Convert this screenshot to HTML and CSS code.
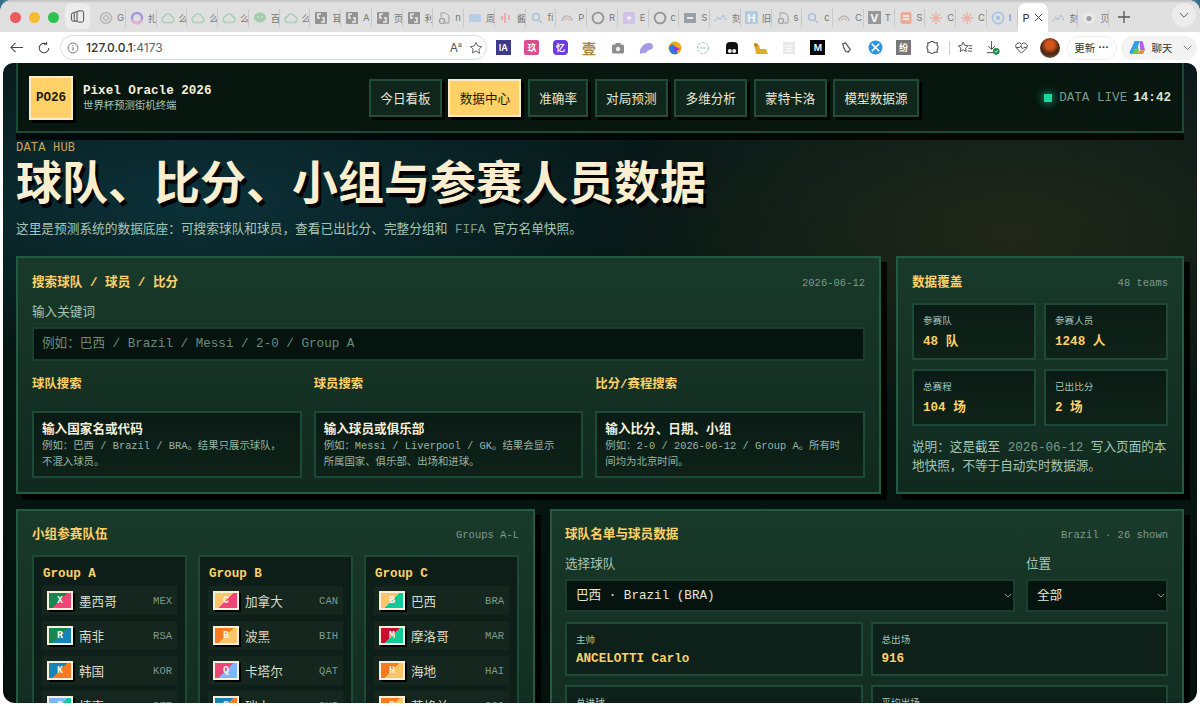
FILE: index.html
```html
<!DOCTYPE html>
<html lang="zh-CN">
<head>
<meta charset="utf-8">
<title>Pixel Oracle 2026</title>
<link rel="stylesheet" href="styles.css">
</head>
<body>
<svg class="defs" width="0" height="0" aria-hidden="true">
  <symbol id="i-ring" viewBox="0 0 14 14"><circle cx="7" cy="7" r="5.5" fill="#ddd" stroke="#aaa" stroke-width="1.5"/><circle cx="7" cy="7" r="2.4" fill="none" stroke="#999"/></symbol>
  <symbol id="i-purple" viewBox="0 0 14 14"><circle cx="7" cy="7" r="5" fill="none" stroke="#8f7be0" stroke-width="2.4"/><path d="M2 9a5.5 5.5 0 0 0 10 0" fill="none" stroke="#ef9ac6" stroke-width="2.4"/></symbol>
  <symbol id="i-cloud" viewBox="0 0 14 14"><path d="M4 11.5a3 3 0 0 1-.6-5.9 3.8 3.8 0 0 1 7.2 0 3 3 0 0 1-.6 5.9z" fill="none" stroke="#9ccdb0" stroke-width="1.6"/></symbol>
  <symbol id="i-wechat" viewBox="0 0 14 14"><ellipse cx="7" cy="6.5" rx="6" ry="5" fill="#8cc79a"/><circle cx="5" cy="6" r=".8" fill="#e5e5e5"/><circle cx="9" cy="6" r=".8" fill="#e5e5e5"/></symbol>
  <symbol id="i-square" viewBox="0 0 14 14"><rect x="1" y="1" width="12" height="12" rx="1" fill="#777"/><path d="M7 3H4v4h2M7 11h3V7H8" fill="none" stroke="#eee" stroke-width="1.6"/></symbol>
  <symbol id="i-doc" viewBox="0 0 14 14"><path d="M4 6V2h5l3 3v7H8" fill="none" stroke="#888"/><circle cx="5" cy="10" r="2.6" fill="none" stroke="#888" stroke-width="1.3"/></symbol>
  <symbol id="i-mail" viewBox="0 0 14 14"><rect x="1" y="3" width="12" height="8" rx="1.5" fill="#a6c9e8"/></symbol>
  <symbol id="i-red" viewBox="0 0 14 14"><path d="M6 2v10M3 5v4M10 4v5" stroke="#ef9aa0" stroke-width="2" fill="none"/></symbol>
  <symbol id="i-search" viewBox="0 0 14 14"><circle cx="6" cy="6" r="3.4" fill="none" stroke="#8fb3dd" stroke-width="1.4"/><path d="M9 9l3 3" stroke="#8fb3dd" stroke-width="1.4"/></symbol>
  <symbol id="i-arc" viewBox="0 0 14 14"><path d="M2 10a5 5 0 0 1 10 0" fill="none" stroke="#aaa" stroke-width="1.3"/><path d="M4.5 10a2.5 2.5 0 0 1 5 0" fill="none" stroke="#e8b0a8" stroke-width="1.3"/></symbol>
  <symbol id="i-plus" viewBox="0 0 14 14"><rect x="1" y="1" width="12" height="12" rx="2.5" fill="#c9b6ee"/><path d="M7 4.5v5M4.5 7h5" stroke="#fff" stroke-width="1.4"/></symbol>
  <symbol id="i-git" viewBox="0 0 14 14"><circle cx="7" cy="7" r="5.4" fill="none" stroke="#777" stroke-width="1.8"/></symbol>
  <symbol id="i-bar" viewBox="0 0 14 14"><rect x="1" y="2" width="12" height="10" rx="1" fill="#7b8794"/><rect x="4" y="6" width="6" height="2" fill="#eee"/></symbol>
  <symbol id="i-dots" viewBox="0 0 14 14"><path d="M1 10l3-4 2 3 3-5 3 5" fill="none" stroke="#9bb8d8" stroke-width="1.4" stroke-dasharray="2 1"/></symbol>
  <symbol id="i-book" viewBox="0 0 14 14"><rect x="1.5" y="1" width="11" height="12" rx="2" fill="#ef9a80"/><path d="M4 5h6M4 8h6" stroke="#fff" stroke-width="1.4"/></symbol>
  <symbol id="i-star" viewBox="0 0 14 14"><path d="M7 1v12M1 7h12M3 3l8 8M11 3l-8 8" stroke="#eda38f" stroke-width="1.4"/></symbol>
  <symbol id="i-target" viewBox="0 0 14 14"><circle cx="7" cy="7" r="5.6" fill="none" stroke="#8fb8e8" stroke-width="1.6"/><circle cx="7" cy="7" r="2.2" fill="#8fb8e8"/></symbol>
  <symbol id="i-apple" viewBox="0 0 14 14"><circle cx="7" cy="7" r="6" fill="#eee"/><circle cx="7" cy="7.5" r="2.6" fill="#888"/></symbol>
</svg>

<div class="window">
  <div class="tabstrip">
    <div class="lights"><i class="light red"></i><i class="light amber"></i><i class="light green"></i></div>
    <div class="tabgroup"><svg viewBox="0 0 16 16" width="15" height="15"><rect x="1.5" y="4" width="6" height="9" rx="2" fill="none" stroke="#444"/><rect x="4.500" y="3" width="6" height="10" rx="2" fill="#ececec" stroke="#444"/><rect x="7.500" y="2" width="7" height="12" rx="2" fill="#ececec" stroke="#444"/></svg></div>
    <div class="tabs">
      <div class="tab"><svg class="fav"><use href="#i-ring"/></svg><b>G</b></div>
      <div class="tab"><svg class="fav"><use href="#i-purple"/></svg><b>扎</b></div>
      <div class="tab"><svg class="fav"><use href="#i-cloud"/></svg><b>么</b></div>
      <div class="tab"><svg class="fav"><use href="#i-cloud"/></svg><b>么</b></div>
      <div class="tab"><svg class="fav"><use href="#i-cloud"/></svg><b>么</b></div>
      <div class="tab"><svg class="fav"><use href="#i-wechat"/></svg><b>百</b></div>
      <div class="tab"><svg class="fav"><use href="#i-cloud"/></svg><b>么</b></div>
      <div class="tab"><svg class="fav"><use href="#i-square"/></svg><b>耳</b></div>
      <div class="tab"><svg class="fav"><use href="#i-square"/></svg><b>A</b></div>
      <div class="tab"><svg class="fav"><use href="#i-square"/></svg><b>页</b></div>
      <div class="tab"><svg class="fav"><use href="#i-square"/></svg><b>利</b></div>
      <div class="tab"><svg class="fav"><use href="#i-doc"/></svg><b>n</b></div>
      <div class="tab"><svg class="fav"><use href="#i-mail"/></svg><b>周</b></div>
      <div class="tab"><svg class="fav"><use href="#i-red"/></svg><b>酱</b></div>
      <div class="tab"><svg class="fav"><use href="#i-search"/></svg><b>fi</b></div>
      <div class="tab"><svg class="fav"><use href="#i-arc"/></svg><b>P</b></div>
      <div class="tab"><svg class="fav"><use href="#i-git"/></svg><b>R</b></div>
      <div class="tab"><svg class="fav"><use href="#i-plus"/></svg><b>E</b></div>
      <div class="tab"><svg class="fav"><use href="#i-git"/></svg><b>c</b></div>
      <div class="tab"><svg class="fav"><use href="#i-bar"/></svg><b>S</b></div>
      <div class="tab"><svg class="fav"><use href="#i-dots"/></svg><b>刻</b></div>
      <div class="tab"><span class="fav-box hblue">H</span><b>旧</b></div>
      <div class="tab"><svg class="fav"><use href="#i-doc"/></svg><b>s</b></div>
      <div class="tab"><svg class="fav"><use href="#i-search"/></svg><b>c</b></div>
      <div class="tab"><svg class="fav"><use href="#i-arc"/></svg><b>C</b></div>
      <div class="tab"><span class="fav-box vgray">V</span><b>T</b></div>
      <div class="tab"><svg class="fav"><use href="#i-book"/></svg><b>S</b></div>
      <div class="tab"><svg class="fav"><use href="#i-star"/></svg><b>C</b></div>
      <div class="tab"><svg class="fav"><use href="#i-star"/></svg><b>C</b></div>
      <div class="tab"><svg class="fav"><use href="#i-target"/></svg><b>I</b></div>
      <div class="tab-active"><span>P</span><svg viewBox="0 0 10 10" width="9" height="9"><path d="M1 1l8 8M9 1l-8 8" stroke="#444" stroke-width="1.1"/></svg></div>
      <div class="tab"><svg class="fav"><use href="#i-dots"/></svg><b>刻</b></div>
      <div class="tab"><svg class="fav"><use href="#i-apple"/></svg><b>贝</b></div>
    </div>
    <svg class="newtab" viewBox="0 0 14 14" width="14" height="14"><path d="M7 1v12M1 7h12" stroke="#555" stroke-width="1.3"/></svg>
    <div class="tabmenu"><svg viewBox="0 0 12 8" width="10" height="7"><path d="M1 1l5 5 5-5" fill="none" stroke="#555" stroke-width="1.1"/></svg></div>
  </div>

  <div class="toolbar">
    <svg class="tool-back" viewBox="0 0 16 16" width="15" height="15"><path d="M15 8H2M7 3 2 8l5 5" fill="none" stroke="#444" stroke-width="1.1"/></svg>
    <svg class="tool-reload" viewBox="0 0 16 16" width="14" height="14"><path d="M13.5 8A5.5 5.5 0 1 1 11 3.4M11 .8v3h-3" fill="none" stroke="#444" stroke-width="1.2"/></svg>
    <div class="urlbar">
      <svg viewBox="0 0 14 14" width="12" height="12"><circle cx="7" cy="7" r="5.8" fill="none" stroke="#666"/><path d="M7 6v4M7 3.8v1.2" stroke="#666" stroke-width="1.2"/></svg>
      <span class="url"><strong>127.0.0.1</strong>:4173</span>
      <span class="url-aa">A<sup>a</sup></span>
      <svg viewBox="0 0 16 16" width="14" height="14"><path d="M8 1.6l2 4.2 4.6.6-3.3 3.2.8 4.6L8 11.4l-4.1 2.2.8-4.6L1.400 6.400 6 5.800z" fill="none" stroke="#555"/></svg>
    </div>
    <div class="exts">
      <span class="ext"><span class="ext-box ia">IA</span></span>
      <span class="ext"><span class="ext-box pink">玖</span></span>
      <span class="ext"><span class="ext-box violet">忆</span></span>
      <span class="ext"><span class="ext-tan">壹</span></span>
      <span class="ext"><svg viewBox="0 0 14 14" width="14" height="14"><rect x="1" y="3.500" width="12" height="9" rx="1.500" fill="#8d8d8d"/><rect x="4.500" y="2" width="5" height="3" fill="#8d8d8d"/><circle cx="7" cy="8" r="2.200" fill="#eee"/></svg></span>
      <span class="ext"><svg viewBox="0 0 16 14" width="16" height="14"><path d="M2 13c-1-5 3-11 9-11 3 0 4 2 4 4s-3 3-4 3-3 4-5 3-2 1-4 1z" fill="#a79be8"/></svg></span>
      <span class="ext"><svg viewBox="0 0 14 14" width="14" height="14"><circle cx="7" cy="7" r="6.500" fill="#f3a51c"/><path d="M1 7a6 6 0 0 0 8 6V7L4 3a6 6 0 0 0-3 4z" fill="#2a7fd8"/><path d="M6 5l6 3-6 3z" fill="#8a3be0"/></svg></span>
      <span class="ext"><svg viewBox="0 0 14 14" width="14" height="14"><circle cx="7" cy="7" r="5.500" fill="none" stroke="#9cc9aa" stroke-dasharray="3 1"/><path d="M4 7h6" stroke="#9cc9aa"/></svg></span>
      <span class="ext"><svg viewBox="0 0 14 14" width="14" height="14"><path d="M1 5a4 4 0 0 1 4-4h4a4 4 0 0 1 4 4v8H1z" fill="#111"/><circle cx="4.800" cy="10" r="2" fill="#eee"/><circle cx="9.200" cy="10" r="2" fill="#eee"/></svg></span>
      <span class="ext"><svg viewBox="0 0 16 14" width="16" height="14"><path d="M1 2l3 2h2l1 4h6l2 5H3z" fill="#e0ad24"/><circle cx="3" cy="4" r="2" fill="#c28f1c"/></svg></span>
      <span class="ext"><svg viewBox="0 0 14 14" width="14" height="14"><rect x="1" y="1" width="12" height="12" fill="#e8e8e8"/><path d="M4 5h6M4 7.500h6M4 10h6" stroke="#fff"/></svg></span>
      <span class="ext"><span class="ext-box black">M</span></span>
      <span class="ext"><svg viewBox="0 0 14 14" width="13" height="13"><path d="M3 3l3-1 2 3 3 4-2 3-3-1-2-4z" fill="none" stroke="#666" stroke-width="1.500"/></svg></span>
      <span class="ext"><svg viewBox="0 0 14 14" width="15" height="15"><circle cx="7" cy="7" r="6.500" fill="#2f93e0"/><path d="M3.500 3.500l7 7M10.500 3.500l-7 7" stroke="#fff" stroke-width="1.600"/></svg></span>
      <span class="ext"><span class="ext-box gray">纷</span></span>
      <span class="ext"><svg viewBox="0 0 16 16" width="15" height="15"><path d="M5 3a3 3 0 0 1 5 0h3v3a2.500 2.500 0 0 1 0 4v3h-3a3 3 0 0 1-5 0H3v-3a2.500 2.500 0 0 1 0-4V3z" fill="none" stroke="#444" stroke-width="1.100"/></svg></span>
    </div>
    <i class="tool-sep"></i>
    <svg class="tool-fav" viewBox="0 0 18 16" width="16" height="15"><path d="M7 2l1.700 3.600 3.800.5-2.800 2.600.7 3.800L7 10.600l-3.400 1.900.7-3.800L1.500 6.100l3.800-.5zM13 6h4M13 9h4M12 12h5" fill="none" stroke="#444"/></svg>
    <span class="tool-dl"><svg viewBox="0 0 16 16" width="15" height="15"><path d="M7 1v9M3.500 6.500 7 10l3.500-3.500M2 13.500h9" fill="none" stroke="#444"/><circle cx="12" cy="12" r="3.600" fill="#1f8a4a"/><path d="M10.500 12l1.100 1.100 2-2.200" fill="none" stroke="#fff"/></svg></span>
    <svg class="tool-heart" viewBox="0 0 16 16" width="15" height="15"><path d="M8 14 2.500 8.500a3.400 3.400 0 0 1 5.500-4 3.400 3.400 0 0 1 5.500 4zM2.500 8H6l1.500-2 1.500 3.500L10.500 8H13" fill="none" stroke="#444"/></svg>
    <span class="avatar"></span>
    <span class="update">更新 <em>···</em></span>
    <span class="chat">
      <svg viewBox="0 0 18 18" width="17" height="17"><path d="M6 2h5l-3 14H3a2 2 0 0 1-2-3z" fill="#2fa0e8"/><path d="M11 2h2a2 2 0 0 1 2 2l2 8h-5z" fill="#b460e8"/><path d="M8 16h5a3 3 0 0 0 3-3l1-1h-5z" fill="#f08a3a"/><path d="M3 16l3-6h5l-2 6z" fill="#6fc44a"/></svg>
      <span class="chat-label">聊天</span>
      <svg viewBox="0 0 12 8" width="9" height="6"><path d="M1 1l5 5 5-5" fill="none" stroke="#555"/></svg>
    </span>
  </div>

  <div class="page">
    <header class="topbar">
      <div class="brand">
        <div class="logo">PO26</div>
        <div class="brand-text">
          <div class="brand-name">Pixel Oracle 2026</div>
          <div class="brand-sub">世界杯预测街机终端</div>
        </div>
      </div>
      <nav class="nav">
        <a class="nav-btn">今日看板</a>
        <a class="nav-btn is-active">数据中心</a>
        <a class="nav-btn">准确率</a>
        <a class="nav-btn">对局预测</a>
        <a class="nav-btn">多维分析</a>
        <a class="nav-btn">蒙特卡洛</a>
        <a class="nav-btn">模型数据源</a>
      </nav>
      <div class="status"><i class="status-dot"></i><span>DATA LIVE</span><strong>14:42</strong></div>
    </header>

    <main class="content">
      <section class="hero">
        <div class="eyebrow">DATA HUB</div>
        <h1 class="hero-title">球队、比分、小组与参赛人员数据</h1>
        <p class="hero-sub">这里是预测系统的数据底座：可搜索球队和球员，查看已出比分、完整分组和 <span class="dim">FIFA</span> 官方名单快照。</p>
      </section>

      <div class="grid-top">
        <section class="panel">
          <div class="panel-head"><h2>搜索球队 / 球员 / 比分</h2><span>2026-06-12</span></div>
          <label class="field-label" for="kw">输入关键词</label>
          <input class="text-input" id="kw" placeholder="例如：巴西 / Brazil / Messi / 2-0 / Group A">
          <div class="search-cols">
            <div>
              <h3 class="col-title">球队搜索</h3>
              <div class="hint"><strong>输入国家名或代码</strong><p>例如：巴西 / Brazil / BRA。结果只展示球队，不混入球员。</p></div>
            </div>
            <div>
              <h3 class="col-title">球员搜索</h3>
              <div class="hint"><strong>输入球员或俱乐部</strong><p>例如：Messi / Liverpool / GK。结果会显示所属国家、俱乐部、出场和进球。</p></div>
            </div>
            <div>
              <h3 class="col-title">比分/赛程搜索</h3>
              <div class="hint"><strong>输入比分、日期、小组</strong><p>例如：2-0 / 2026-06-12 / Group A。所有时间均为北京时间。</p></div>
            </div>
          </div>
        </section>

        <section class="panel">
          <div class="panel-head"><h2>数据覆盖</h2><span>48 teams</span></div>
          <div class="stats">
            <div class="stat"><label>参赛队</label><b>48 队</b></div>
            <div class="stat"><label>参赛人员</label><b>1248 人</b></div>
            <div class="stat"><label>总赛程</label><b>104 场</b></div>
            <div class="stat"><label>已出比分</label><b>2 场</b></div>
          </div>
          <p class="note">说明：这是截至 <span class="dim">2026-06-12</span> 写入页面的本地快照，不等于自动实时数据源。</p>
        </section>
      </div>

      <div class="grid-bottom">
        <section class="panel">
          <div class="panel-head"><h2>小组参赛队伍</h2><span>Groups A-L</span></div>
          <div class="groups">
            <div class="group">
              <h3>Group A</h3>
              <div class="team"><span class="flag f-mex">X</span><span class="name">墨西哥</span><span class="code">MEX</span></div>
              <div class="team"><span class="flag f-rsa">R</span><span class="name">南非</span><span class="code">RSA</span></div>
              <div class="team"><span class="flag f-kor">K</span><span class="name">韩国</span><span class="code">KOR</span></div>
              <div class="team"><span class="flag f-cze">C</span><span class="name">捷克</span><span class="code">CZE</span></div>
            </div>
            <div class="group">
              <h3>Group B</h3>
              <div class="team"><span class="flag f-can">C</span><span class="name">加拿大</span><span class="code">CAN</span></div>
              <div class="team"><span class="flag f-bih">B</span><span class="name">波黑</span><span class="code">BIH</span></div>
              <div class="team"><span class="flag f-qat">Q</span><span class="name">卡塔尔</span><span class="code">QAT</span></div>
              <div class="team"><span class="flag f-kor">S</span><span class="name">瑞士</span><span class="code">SUI</span></div>
            </div>
            <div class="group">
              <h3>Group C</h3>
              <div class="team"><span class="flag f-bra">B</span><span class="name">巴西</span><span class="code">BRA</span></div>
              <div class="team"><span class="flag f-mar">M</span><span class="name">摩洛哥</span><span class="code">MAR</span></div>
              <div class="team"><span class="flag f-bih">H</span><span class="name">海地</span><span class="code">HAI</span></div>
              <div class="team"><span class="flag f-bih">S</span><span class="name">苏格兰</span><span class="code">SCO</span></div>
            </div>
          </div>
        </section>

        <section class="panel panel-roster">
          <div class="panel-head"><h2>球队名单与球员数据</h2><span>Brazil · 26 shown</span></div>
          <div class="selects">
            <div>
              <label class="field-label" for="team">选择球队</label>
              <div class="select-wrap">
                <select class="select" id="team"><option>巴西 · Brazil (BRA)</option></select>
                <svg class="chev" viewBox="0 0 10 6" width="8" height="5"><path d="M1 1l4 4 4-4" fill="none" stroke="#b9c9bf"/></svg>
              </div>
            </div>
            <div>
              <label class="field-label" for="pos">位置</label>
              <div class="select-wrap">
                <select class="select" id="pos"><option>全部</option></select>
                <svg class="chev" viewBox="0 0 10 6" width="8" height="5"><path d="M1 1l4 4 4-4" fill="none" stroke="#b9c9bf"/></svg>
              </div>
            </div>
          </div>
          <div class="infos">
            <div class="info"><label>主帅</label><b>ANCELOTTI Carlo</b></div>
            <div class="info"><label>总出场</label><b>916</b></div>
            <div class="info"><label>总进球</label><b>172</b></div>
            <div class="info"><label>平均出场</label><b>35.2</b></div>
          </div>
        </section>
      </div>
    </main>
  </div>
</div>
</body>
</html>
```

FILE: styles.css
```css
* { box-sizing: border-box; }

html, body {
  margin: 0;
  height: 100%;
  overflow: hidden;
}

body {
  background: linear-gradient(90deg, #2d6a8a 0, #b8c8d0 2%, #c9c9c9 50%, #9fb9c9 98%, #2d6a8a 100%);
  font-family: "Liberation Mono", "Noto Sans CJK SC", monospace;
}

.defs { position: absolute; }

.window {
  height: 707px;
  display: flex;
  flex-direction: column;
  background: #fff;
  border-radius: 12px 12px 0 0;
  overflow: hidden;
}

/* browser chrome */
.tabstrip {
  height: 32px;
  flex: none;
  display: flex;
  align-items: flex-end;
  background: linear-gradient(#bfbfbf 0, #dfdfdf 3px, #e0e0e0 100%);
  font-family: Inter, "Noto Sans CJK SC", sans-serif;
}

.lights {
  width: 65px;
  height: 29px;
  padding-left: 10px;
  display: flex;
  align-items: center;
  gap: 8px;
}

.light {
  width: 11px;
  height: 11px;
  border-radius: 50%;
}
.light.red { background: #ec5a5e; }
.light.amber { background: #f7bb2e; }
.light.green { background: #2fc24e; }

.tabgroup {
  width: 25px;
  height: 26px;
  margin-bottom: 3px;
  margin-right: 5px;
  border-radius: 6px;
  background: #ececec;
  display: flex;
  align-items: center;
  justify-content: center;
}

.tabs {
  display: flex;
  height: 29px;
  align-items: center;
}

.tab {
  width: 30.75px;
  height: 18px;
  padding-left: 4px;
  display: flex;
  align-items: center;
  gap: 4px;
  overflow: hidden;
  border-right: 1px solid #c8c8c8;
  flex: none;
}

.tab svg, .tab .fav-box { opacity: .72; }

.tab b {
  font-weight: 400;
  font-size: 9.5px;
  color: #777;
  white-space: nowrap;
}

.fav {
  width: 14px;
  height: 14px;
  flex: none;
}

.fav-box {
  width: 13px;
  height: 13px;
  flex: none;
  display: flex;
  align-items: center;
  justify-content: center;
  font-size: 11px;
  font-weight: 700;
  color: #fff;
}
.hblue { background: #9fc3e0; }
.vgray { background: #7c7c7c; }

.tab-active {
  width: 30px;
  height: 29px;
  flex: none;
  background: #fff;
  border-radius: 8px 8px 0 0;
  display: flex;
  align-items: center;
  justify-content: center;
  gap: 4px;
  font-size: 11px;
  color: #333;
}

.newtab { margin: 0 0 8px 8px; flex: none; }

.tabmenu {
  width: 24px;
  height: 24px;
  margin: 0 4px 5px auto;
  border-radius: 50%;
  background: #ececec;
  display: flex;
  align-items: center;
  justify-content: center;
  flex: none;
}

.toolbar {
  height: 31px;
  flex: none;
  display: flex;
  align-items: center;
  background: #fff;
  font-family: Inter, "Noto Sans CJK SC", sans-serif;
  color: #444;
}

.tool-back { margin-left: 9px; flex: none; }
.tool-reload { margin-left: 13px; flex: none; }

.urlbar {
  width: 427px;
  height: 25px;
  margin-left: 9px;
  padding: 0 3px 0 6px;
  flex: none;
  border: 1px solid #dcdcdc;
  border-radius: 13px;
  display: flex;
  align-items: center;
  gap: 7px;
}

.url {
  flex: 1;
  font-size: 12px;
  color: #666;
}
.url strong { font-weight: 500; color: #333; }

.url-aa { font-size: 12px; color: #555; }
.url-aa sup { font-size: 7px; }

.exts {
  margin-left: 2px;
  display: flex;
}

.ext {
  width: 28.6px;
  display: flex;
  justify-content: center;
  align-items: center;
  flex: none;
}

.ext-box {
  width: 15px;
  height: 15px;
  border-radius: 2px;
  display: flex;
  align-items: center;
  justify-content: center;
  font-size: 9px;
  color: #fff;
  font-weight: 600;
}
.ia { background: #3d3a8c; border-radius: 0; }
.pink { background: #e04a8e; }
.violet { background: #6b3de0; border-radius: 4px; }
.black { background: #000; border-radius: 0; }
.gray { background: #777; border-radius: 0; }
.ext-tan { font-size: 14px; color: #a8843c; font-weight: 700; }

.tool-sep {
  width: 1px;
  height: 14px;
  margin-left: 2px;
  background: #ccc;
}

.tool-fav { margin-left: 7px; flex: none; }
.tool-dl { margin-left: 12px; display: flex; }
.tool-heart { margin-left: 14px; flex: none; }

.avatar {
  width: 20px;
  height: 20px;
  margin-left: 11px;
  border-radius: 50%;
  flex: none;
  background: radial-gradient(circle at 50% 35%, #d2541c 0 25%, #4a2415 55%, #8a6a4a 100%);
}

.update {
  width: 50px;
  height: 24px;
  margin-left: 7px;
  flex: none;
  border: 1px solid #eee;
  border-radius: 12px;
  display: flex;
  align-items: center;
  justify-content: center;
  gap: 3px;
  font-size: 10.5px;
  color: #333;
}
.update em { font-style: normal; font-weight: 700; }

.chat {
  width: 76px;
  height: 24px;
  margin-left: 4px;
  padding: 0 5px 0 8px;
  flex: none;
  border-radius: 12px;
  background: #f3f3f3;
  display: flex;
  align-items: center;
  gap: 6px;
  font-size: 10.5px;
  color: #333;
}

.chat-label {
  flex: none;
  white-space: nowrap;
  margin-right: auto;
}

/* page */
.page {
  height: 640px;
  margin: 0 3px;
  flex: none;
  overflow: hidden;
  border-radius: 10px 10px 12px 12px;
  color: #a9c5b4;
  background:
    radial-gradient(ellipse 480px 160px at 190px 140px, rgba(15, 70, 85, .55), transparent 100%),
    radial-gradient(ellipse 420px 200px at 1010px 170px, rgba(170, 130, 40, .16), transparent 100%),
    linear-gradient(#08191a, #051510 60%, #04110d);
}

.topbar {
  width: 1168px;
  height: 70px;
  margin-left: 13px;
  padding: 14px 0 12px 11px;
  display: flex;
  align-items: center;
  background: #07170f;
  border: 2px solid #1d4a37;
  border-top: 0;
  box-shadow: 0 7px 0 rgba(0, 0, 0, .75);
  position: relative;
}

.brand {
  width: 340px;
  flex: none;
  display: flex;
  align-items: center;
  gap: 10px;
}

.logo {
  width: 44px;
  height: 44px;
  background: #ffd166;
  border: 2px solid #f8ecc8;
  box-shadow: 3px 3px 0 #000;
  display: flex;
  align-items: center;
  justify-content: center;
  color: #1b1a0c;
  font-weight: 700;
  font-size: 12.6px;
}

.brand-name {
  font-size: 12.6px;
  line-height: 15px;
  font-weight: 700;
  color: #f5efdc;
}

.brand-sub {
  font-size: 10.4px;
  line-height: 14px;
  color: #a9c5b4;
}

.nav {
  display: flex;
  gap: 6.5px;
}

.nav-btn {
  height: 38px;
  padding: 0 9.3px 1px;
  display: flex;
  align-items: center;
  background: #10261d;
  border: 2px solid #1f4d39;
  box-shadow: 3px 3px 0 #000;
  font-size: 12.6px;
  color: #e8e6d2;
}

.nav-btn.is-active {
  background: #ffd166;
  border-color: #f8ecc8;
  color: #1b1a0c;
}

.status {
  margin-left: auto;
  margin-right: 11px;
  display: flex;
  align-items: center;
  font-size: 12.6px;
  color: #7f9a8a;
}

.status-dot {
  width: 8px;
  height: 8px;
  margin-right: 7px;
  background: #18d69c;
  box-shadow: 0 0 8px #18d69c;
}

.status strong {
  margin-left: 6px;
  color: #d9e2cf;
}

.content {
  padding: 0 13px;
}

.hero {
  height: 123px;
  padding-top: 9px;
}

.eyebrow {
  font-size: 12px;
  line-height: 12px;
  letter-spacing: .2px;
  color: #c8a75c;
}

.hero-title {
  margin: -1px 0 0;
  font-size: 46px;
  line-height: 52px;
  font-weight: 700;
  color: #f9eed0;
  text-shadow: 3px 4px 0 #000;
  font-family: "Noto Sans CJK SC", sans-serif;
}

.hero-sub {
  margin: 16px 0 0;
  font-size: 12.7px;
  line-height: 18px;
  color: #a9c5b4;
}

.dim { color: #7f9a8a; }

.panel {
  padding: 17px 14px 14px;
  background:
    repeating-linear-gradient(0deg, rgba(255, 255, 255, .008) 0 1px, transparent 1px 4px),
    linear-gradient(#18392a, #10291e);
  border: 2px solid #245a41;
  box-shadow: 6px 6px 0 rgba(0, 0, 0, .85);
}

.grid-top {
  display: grid;
  grid-template-columns: 865px 288px;
  gap: 15px;
}

.grid-bottom {
  margin-top: 15px;
  display: grid;
  grid-template-columns: 519px 634px;
  gap: 15px;
}

.grid-bottom .panel {
  padding-top: 16px;
}

.panel-roster {
  padding-left: 13px;
}

.panel-head {
  height: 16px;
  display: flex;
  align-items: center;
  justify-content: space-between;
}

.panel-head h2 {
  margin: 0;
  font-size: 12.6px;
  line-height: 16px;
  font-weight: 700;
  color: #ffd166;
}

.panel-head span {
  font-size: 10.5px;
  color: #7f9a8a;
}

.field-label {
  display: block;
  font-size: 12.6px;
  line-height: 16px;
  color: #a9c5b4;
}

.panel-head + .field-label {
  margin-top: 14px;
}

.text-input {
  display: block;
  width: 100%;
  height: 34px;
  margin-top: 6px;
  padding: 0 8px;
  background: #06140f;
  border: 2px solid #1a3f2f;
  border-radius: 0;
  outline: 0;
  font: 12.6px "Liberation Mono", "Noto Sans CJK SC", monospace;
  color: #e8e6d2;
}

.text-input::placeholder {
  color: #6e8a7c;
  opacity: 1;
}

.search-cols {
  margin-top: 16px;
  display: grid;
  grid-template-columns: repeat(3, 1fr);
  gap: 12px;
}

.col-title {
  margin: 0 0 18px;
  font-size: 12.4px;
  line-height: 16px;
  font-weight: 700;
  color: #ffd166;
}

.hint {
  height: 67px;
  padding: 9px 18px 9px 8px;
  background: linear-gradient(#0a1b15, #0e2219);
  border: 2px solid #1d4a36;
}

.hint strong {
  display: block;
  font-size: 12.6px;
  line-height: 16px;
  color: #f5efdc;
}

.hint p {
  margin: 0;
  font-size: 10.4px;
  line-height: 16px;
  color: #98b5a4;
}

.stats {
  margin-top: 12px;
  display: grid;
  grid-template-columns: 1fr 1fr;
  gap: 9px 8px;
}

.stat {
  height: 57px;
  padding: 10px 9px;
  background: linear-gradient(#0a1b15, #0f2319);
  border: 2px solid #1d4a36;
}

.stat label, .info label {
  display: block;
  font-size: 9.6px;
  line-height: 14px;
  color: #a9c5b4;
}

.stat b, .info b {
  display: block;
  font-size: 12.6px;
  line-height: 16px;
  font-weight: 700;
  color: #ffd166;
}

.stat b { margin-top: 5px; }
.info b { margin-top: 3px; }

.note {
  margin: 13px 0 0;
  font-size: 12.6px;
  line-height: 19px;
  color: #a9c5b4;
}

.groups {
  margin-top: 12px;
  display: grid;
  grid-template-columns: repeat(3, 155px);
  gap: 11px;
}

.group {
  height: 200px;
  padding: 9px 8px;
  background: linear-gradient(#0c1e17, #0d2019);
  border: 2px solid #1d4a36;
}

.group h3 {
  margin: 0 0 4px 1px;
  font-size: 12.6px;
  line-height: 16px;
  font-weight: 700;
  color: #ffd166;
}

.team {
  height: 29px;
  margin-bottom: 6px;
  padding: 0 5px;
  display: flex;
  align-items: center;
  background: #14261e;
}

.flag {
  width: 26px;
  height: 19px;
  flex: none;
  border: 2px solid #f5efdc;
  box-shadow: 2px 2px 0 #000;
  display: flex;
  align-items: center;
  justify-content: center;
  font-size: 10px;
  font-weight: 700;
  color: #fbf5e4;
}

.f-mex { background: linear-gradient(135deg, #14894f 50%, #ee4676 50%); }
.f-rsa { background: linear-gradient(135deg, #14894f 50%, #1585b8 50%); }
.f-kor { background: linear-gradient(135deg, #1585b8 50%, #f97a1f 50%); }
.f-cze { background: linear-gradient(135deg, #7db6ff 50%, #12c998 50%); }
.f-can { background: linear-gradient(135deg, #fdc56a 50%, #ee4676 50%); }
.f-bih { background: linear-gradient(135deg, #f97a1f 50%, #fdc56a 50%); }
.f-qat { background: linear-gradient(135deg, #ee4676 50%, #7db6ff 50%); }
.f-bra { background: linear-gradient(135deg, #fdc56a 50%, #12c998 50%); }
.f-mar { background: linear-gradient(135deg, #c8102e 50%, #12c998 50%); }

.name {
  margin-left: 6px;
  padding-bottom: 1px;
  flex: 1;
  font-size: 12.6px;
  color: #d8dccb;
}

.code {
  font-size: 10.5px;
  color: #7f9a8a;
}

.selects {
  margin-top: 14px;
  display: grid;
  grid-template-columns: 450px 142px;
  gap: 11px;
}

.select-wrap {
  position: relative;
  margin-top: 6px;
}

.select {
  display: block;
  width: 100%;
  height: 33px;
  padding: 0 9px;
  appearance: none;
  background: #06140f;
  border: 2px solid #1a3f2f;
  border-radius: 0;
  outline: 0;
  font: 12.6px "Liberation Mono", "Noto Sans CJK SC", monospace;
  color: #e8e6d2;
}

.chev {
  position: absolute;
  right: 3px;
  top: 14px;
}

.infos {
  margin-top: 10px;
  display: grid;
  grid-template-columns: 1fr 1fr;
  gap: 9px 8px;
}

.info {
  height: 54px;
  padding: 10px 9px;
  background: #0d2019;
  border: 2px solid #1d4a36;
}
```
